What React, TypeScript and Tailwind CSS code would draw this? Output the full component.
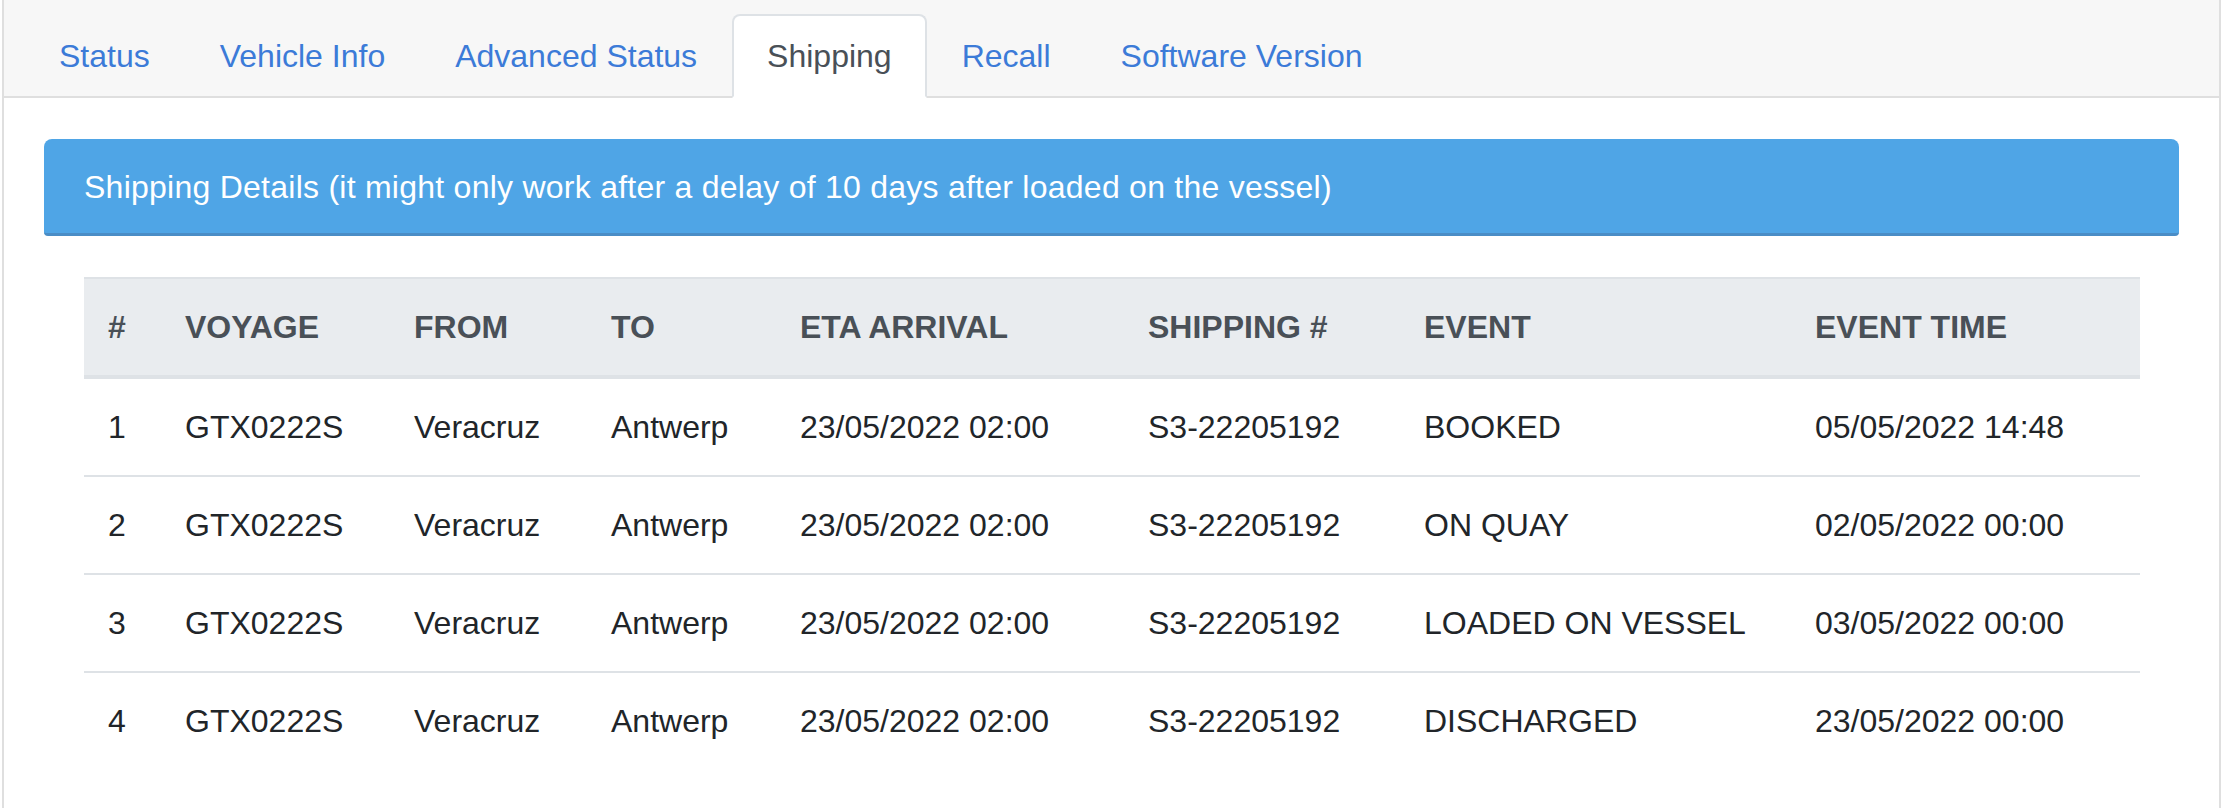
import React from 'react';

const tabs = ['Status', 'Vehicle Info', 'Advanced Status', 'Shipping', 'Recall', 'Software Version'];

const columns = [
    { label: '#', width: 'w-[77px]' },
    { label: 'Voyage', width: 'w-[229px]' },
    { label: 'From', width: 'w-[197px]' },
    { label: 'To', width: 'w-[189px]' },
    { label: 'ETA Arrival', width: 'w-[348px]' },
    { label: 'Shipping #', width: 'w-[276px]' },
    { label: 'Event', width: 'w-[391px]' },
    { label: 'Event Time', width: 'w-[349px]' },
];

const rows = [
    { event: 'BOOKED', time: '05/05/2022 14:48' },
    { event: 'ON QUAY', time: '02/05/2022 00:00' },
    { event: 'LOADED ON VESSEL', time: '03/05/2022 00:00' },
    { event: 'DISCHARGED', time: '23/05/2022 00:00' },
];

export default function App() {
    const active = 'Shipping';

    return (
<div className="w-full h-[808px] bg-white pl-[2px] pr-[1px] font-['Liberation_Sans',Arial,sans-serif] text-[32px] leading-[48px]">
 <div className="h-full border-x-2 border-[#dfdfdf]">
    {/* tab bar */}
    <div className="bg-[#f7f7f7] pt-[14px] pl-[20px] border-b-2 border-[#dfdfdf]">
      <ul className="flex -mb-[2px]">
        {tabs.map((tab) => (
          <li key={tab}>
            {tab === active ? (
              <span className="block px-[33px] py-[16px] border-2 border-[#dee2e6] border-b-white bg-white rounded-t-[8px] text-[#495057]">{tab}</span>
            ) : (
              <a className="block px-[33px] py-[16px] border-2 border-transparent rounded-t-[8px] text-[#3c7bd8]">{tab}</a>
            )}
          </li>
        ))}
      </ul>
    </div>

    <div className="pt-[41px] px-[40px]">
      <div className="bg-[#4fa5e6] text-white tracking-[0.25px] px-[40px] pt-[24px] pb-[22px] rounded-t-[8px] rounded-b-[4px] border-b-[3px] border-[#4a8dc6]">
        Shipping Details (it might only work after a delay of 10 days after loaded on the vessel)
      </div>

      <div className="px-[40px] mt-[41px]">
        <table className="w-full table-fixed border-collapse text-left">
          <thead>
            <tr className="bg-[#e9ecef]">
              {columns.map((col) => (
                <th key={col.label} className={`${col.width} px-[24px] py-[24px] font-bold uppercase text-[#495057] border-t-2 border-b-4 border-[#dee2e6]`}>{col.label}</th>
              ))}
            </tr>
          </thead>
          <tbody className="text-[#212529]">
            {rows.map((row, i) => (
              <tr key={i}>
                <td className="px-[24px] py-[24px] border-t-2 border-[#dee2e6]">{i + 1}</td>
                <td className="px-[24px] py-[24px] border-t-2 border-[#dee2e6]">GTX0222S</td>
                <td className="px-[24px] py-[24px] border-t-2 border-[#dee2e6]">Veracruz</td>
                <td className="px-[24px] py-[24px] border-t-2 border-[#dee2e6]">Antwerp</td>
                <td className="px-[24px] py-[24px] border-t-2 border-[#dee2e6]">23/05/2022 02:00</td>
                <td className="px-[24px] py-[24px] border-t-2 border-[#dee2e6]">S3-22205192</td>
                <td className="px-[24px] py-[24px] border-t-2 border-[#dee2e6]">{row.event}</td>
                <td className="px-[24px] py-[24px] border-t-2 border-[#dee2e6]">{row.time}</td>
              </tr>
            ))}
          </tbody>
        </table>
      </div>
    </div>
 </div>
</div>
    );
}
